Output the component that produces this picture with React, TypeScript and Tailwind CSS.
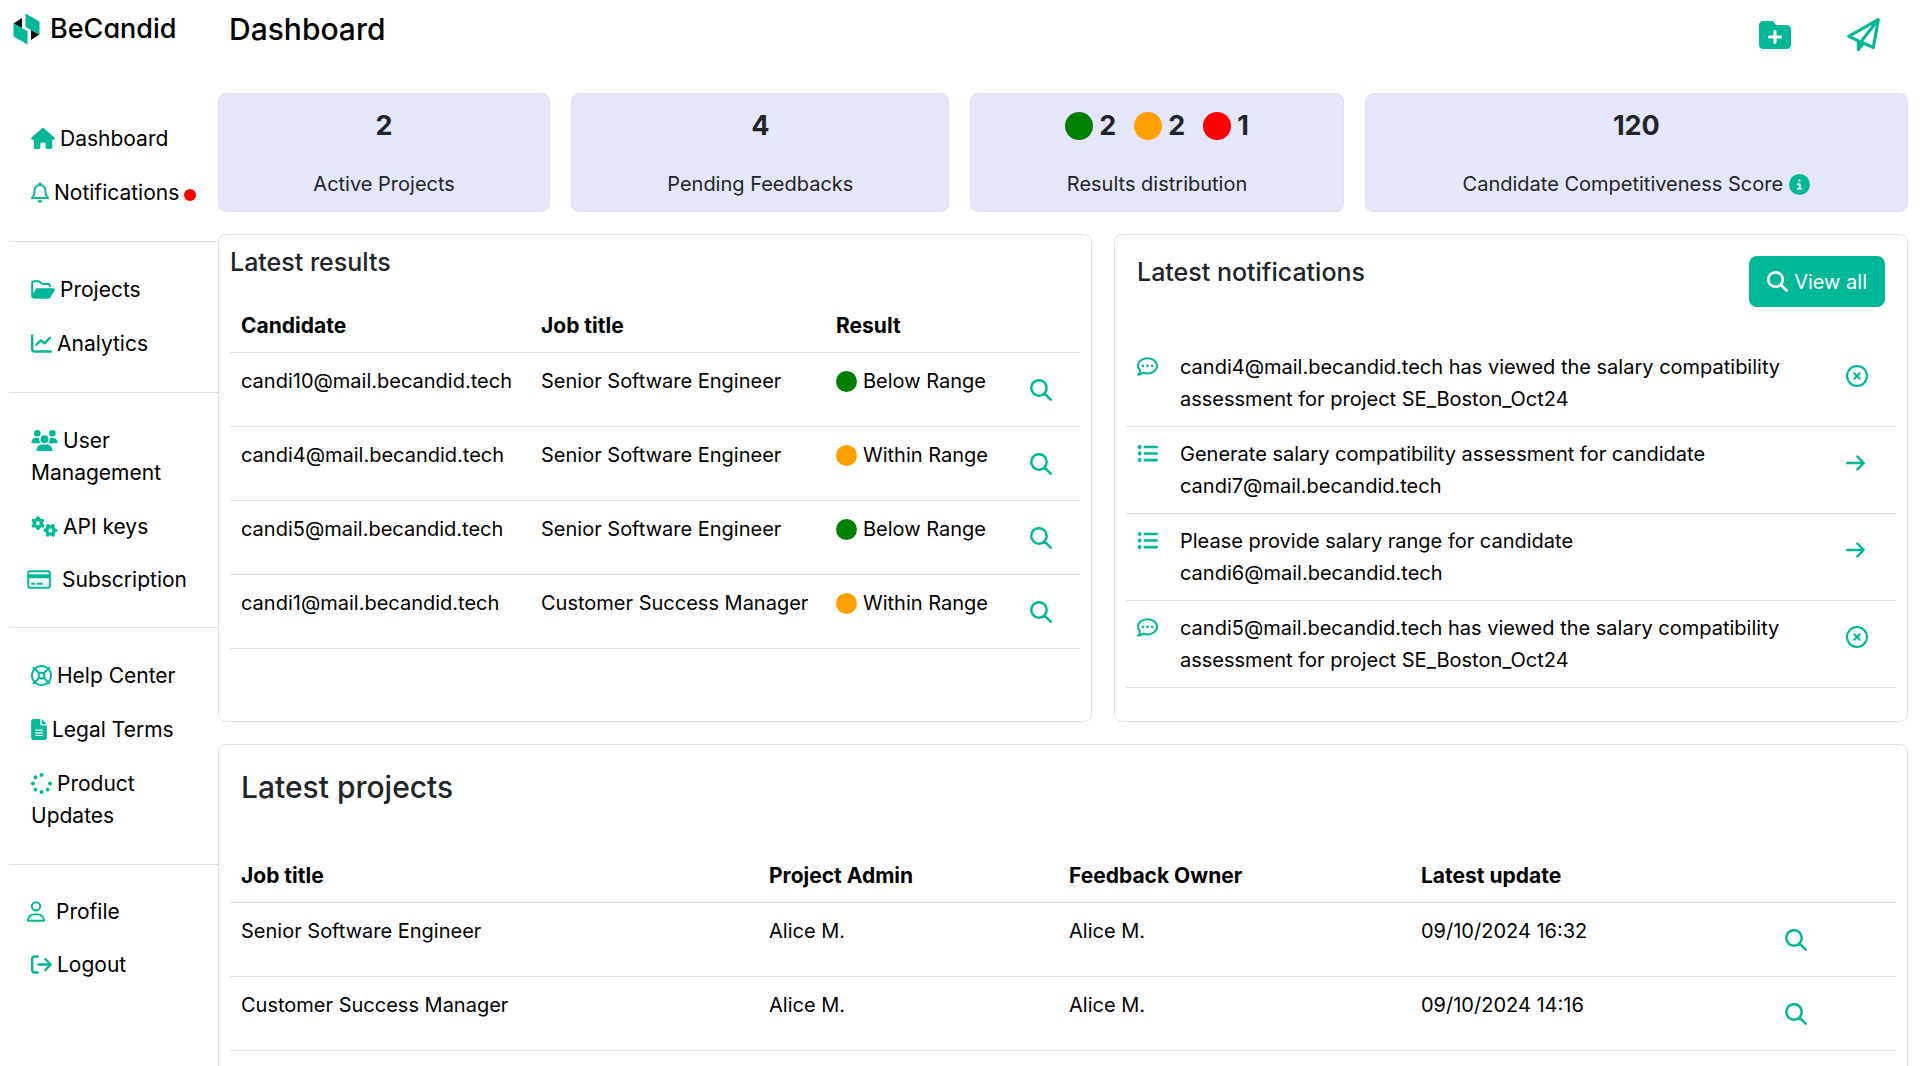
import type { ReactNode } from "react";
import {
  FaCircleInfo,
  FaFileLines,
  FaFolderPlus,
  FaGears,
  FaHouse,
  FaListUl,
  FaMagnifyingGlass,
  FaRegBell,
  FaRegCircleXmark,
  FaRegCommentDots,
  FaRegCreditCard,
  FaRegLifeRing,
  FaRegUser,
  FaSpinner,
  FaUsers,
} from "react-icons/fa6";

type IconProps = { className?: string };
type NavItem = {
  label: string;
  icon: (props: IconProps) => ReactNode;
  width: string;
  alert?: boolean;
  outdent?: boolean;
};

function LineIcon({ d, viewBox = "0 0 512 512", className }: IconProps & { d: string; viewBox?: string }) {
  return (
    <svg
      viewBox={viewBox}
      fill="none"
      stroke="currentColor"
      strokeWidth="58"
      strokeLinecap="round"
      strokeLinejoin="round"
      className={className}
      aria-hidden="true"
    >
      <path d={d} />
    </svg>
  );
}

const SearchIcon = ({ className }: IconProps) => (
  <LineIcon className={className} d="M29 208a180 180 0 1 0 360 0a180 180 0 1 0 -360 0M340 340L482 482" />
);

const ChartIcon = ({ className }: IconProps) => (
  <LineIcon className={className} d="M29 60V396a56 56 0 0 0 56 56H483M132 282L244 178 332 252 462 116" />
);

const LogoutIcon = ({ className }: IconProps) => (
  <LineIcon
    className={className}
    d="M166 60H90a61 61 0 0 0-61 61V391a61 61 0 0 0 61 61H166M182 256H476M350 122L483 256 350 390"
  />
);

const ArrowIcon = ({ className }: IconProps) => (
  <LineIcon className={className} viewBox="0 0 448 512" d="M29 256H412M268 106L418 256 268 406" />
);

const FolderOpenIcon = ({ className }: IconProps) => (
  <svg viewBox="0 0 576 512" fill="currentColor" className={className} aria-hidden="true">
    <path d="M384 480h48c11.400 0 21.900-6 27.600-15.900l112-192c5.800-9.900 5.800-22.100 .100-32.100S555.500 224 544 224H144c-11.400 0-21.900 6-27.600 15.900L48 357.100V96c0-8.800 7.200-16 16-16H181.500c4.200 0 8.300 1.700 11.300 4.700l26.500 26.500c21 21 49.500 32.800 79.200 32.800H416c8.800 0 16 7.200 16 16v32h48V160c0-35.300-28.700-64-64-64H298.500c-17 0-33.300-6.700-45.300-18.700L226.700 50.700c-12-12-28.300-18.700-45.300-18.700H64C28.700 32 0 60.700 0 96V416c0 35.300 28.700 64 64 64H384z" />
  </svg>
);

const PlaneIcon = ({ className }: IconProps) => (
  <svg viewBox="0 0 512 512" className={className} aria-hidden="true">
    <path
      d="M486 26L26 284 408 460ZM482 32L218 366"
      fill="none"
      stroke="currentColor"
      strokeWidth="48"
      strokeLinejoin="round"
      strokeLinecap="round"
    />
    <path d="M152 346V488a24 24 0 0 0 44 14L280 400Z" fill="currentColor" />
  </svg>
);

const NAV: NavItem[][] = [
  [
    { label: "Dashboard", icon: FaHouse, width: "w-6" },
    { label: "Notifications", icon: FaRegBell, width: "w-[18px]", alert: true },
  ],
  [
    { label: "Projects", icon: FolderOpenIcon, width: "w-6" },
    { label: "Analytics", icon: ChartIcon, width: "w-[21px]" },
  ],
  [
    { label: "User Management", icon: FaUsers, width: "w-[27px]" },
    { label: "API keys", icon: FaGears, width: "w-[27px]" },
    { label: "Subscription", icon: FaRegCreditCard, width: "w-6", outdent: true },
  ],
  [
    { label: "Help Center", icon: FaRegLifeRing, width: "w-[21px]" },
    { label: "Legal Terms", icon: FaFileLines, width: "w-4" },
    { label: "Product Updates", icon: FaSpinner, width: "w-[21px]" },
  ],
  [
    { label: "Profile", icon: FaRegUser, width: "w-[18px]", outdent: true },
    { label: "Logout", icon: LogoutIcon, width: "w-[21px]" },
  ],
];

const RESULTS = [
  { candidate: "candi10@mail.becandid.tech", job: "Senior Software Engineer", below: true },
  { candidate: "candi4@mail.becandid.tech", job: "Senior Software Engineer", below: false },
  { candidate: "candi5@mail.becandid.tech", job: "Senior Software Engineer", below: true },
  { candidate: "candi1@mail.becandid.tech", job: "Customer Success Manager", below: false },
];

const NOTIFICATIONS = [
  {
    text: "candi4@mail.becandid.tech has viewed the salary compatibility assessment for project SE_Boston_Oct24",
    task: false,
  },
  { text: "Generate salary compatibility assessment for candidate candi7@mail.becandid.tech", task: true },
  { text: "Please provide salary range for candidate candi6@mail.becandid.tech", task: true },
  {
    text: "candi5@mail.becandid.tech has viewed the salary compatibility assessment for project SE_Boston_Oct24",
    task: false,
  },
];

const PROJECTS = [
  { job: "Senior Software Engineer", admin: "Alice M.", owner: "Alice M.", updated: "09/10/2024 16:32" },
  { job: "Customer Success Manager", admin: "Alice M.", owner: "Alice M.", updated: "09/10/2024 14:16" },
];

const TH = "px-[11px] pt-[11px] pb-[10px] text-left text-[21px] leading-8 font-bold";
const TD = "px-[11px] pt-3 align-top";

function Logo() {
  return (
    <a href="#home" className="flex items-center gap-[10px] pl-1 text-black">
      <svg viewBox="0 0 27 32" className="h-8 w-[27px] shrink-0" aria-hidden="true">
        <path d="M0.500 10.500 9 5V15z" fill="#0b0f0e" />
        <path d="M18 17 26.500 21.500 18 27z" fill="#0b0f0e" />
        <path d="M12.500 0.500 26.500 8.500V21.500L12.500 14z" fill="#00b898" />
        <path d="M0.500 10.500 14.500 18V31.500L0.500 23.500z" fill="#00b898" />
      </svg>
      <span className="text-[27px] leading-8 font-medium [font-feature-settings:'cv11']">BeCandid</span>
    </a>
  );
}

function Sidebar() {
  return (
    <aside className="w-[218px] shrink-0 pt-[13px] pl-[9px]">
      <Logo />
      <nav aria-label="Main" className="pt-[46px] text-[21px]">
        {NAV.map((group, i) => (
          <ul
            key={i}
            className="flex flex-col gap-[22px] border-b border-[#dee2e6] py-8 pr-5 pl-[22px] last:border-b-0"
          >
            {group.map(({ label, icon: Icon, width, alert, outdent }) => (
              <li key={label} className={outdent ? "-ml-1 leading-[30px]" : "leading-8"}>
                <a href={"#" + label.toLowerCase().replace(" ", "-")} className="text-black">
                  <Icon
                    className={
                      (outdent ? "mr-[11px] " : "mr-[5px] ") + width + " inline h-[21px] align-[-3px] text-[#00b898]"
                    }
                  />
                  {label}
                  {alert && <span className="ml-[5px] inline-block size-3 rounded-full bg-[#ff0000] align-[-1px]" />}
                </a>
              </li>
            ))}
          </ul>
        ))}
      </nav>
    </aside>
  );
}

function StatCard({ value, label }: { value: ReactNode; label: ReactNode }) {
  return (
    <div className="flex flex-col items-center gap-[26px] rounded-lg border border-[#dee2e6] bg-[#e6e6fa] pt-4 pb-[11px]">
      <div className="text-[27px] leading-8 font-bold">{value}</div>
      <div className="leading-8">{label}</div>
    </div>
  );
}

function Tally({ dot, count }: { dot: string; count: number }) {
  return (
    <span className="flex items-center gap-[6px]">
      <span className={"size-7 rounded-full " + dot} />
      {count}
    </span>
  );
}

function OpenButton({ label }: { label: string }) {
  return (
    <button type="button" aria-label={label} className="mt-[14px] block text-[#00b898]">
      <SearchIcon className="size-[22px]" />
    </button>
  );
}

function LatestResults() {
  return (
    <section className="rounded-lg border border-[#dee2e6] p-[11px]">
      <h2 className="text-[25px] leading-8 font-medium">Latest results</h2>
      <table className="mt-[21px] w-full table-fixed text-black">
        <colgroup>
          <col className="w-[300px]" />
          <col className="w-[295px]" />
          <col />
          <col className="w-[61px]" />
        </colgroup>
        <thead>
          <tr className="border-b border-[#dee2e6]">
            <th className={TH}>Candidate</th>
            <th className={TH}>Job title</th>
            <th className={TH}>Result</th>
            <th className={TH}></th>
          </tr>
        </thead>
        <tbody>
          {RESULTS.map((r) => (
            <tr key={r.candidate} className="h-[74px] border-b border-[#dee2e6]">
              <td className={TD}>{r.candidate}</td>
              <td className={TD}>{r.job}</td>
              <td className={TD}>
                <span className="flex items-center gap-[6px] whitespace-nowrap">
                  <span
                    className={
                      r.below ? "size-[21px] rounded-full bg-[#008000]" : "size-[21px] rounded-full bg-[#ffa000]"
                    }
                  />
                  {r.below ? "Below Range" : "Within Range"}
                </span>
              </td>
              <td className={TD}>
                <OpenButton label={"Open result of " + r.candidate} />
              </td>
            </tr>
          ))}
        </tbody>
      </table>
    </section>
  );
}

function LatestNotifications() {
  return (
    <section className="rounded-lg border border-[#dee2e6] p-[11px] pt-[21px]">
      <div className="flex items-start justify-between px-[11px]">
        <h2 className="text-[25px] leading-8 font-medium">Latest notifications</h2>
        <button
          type="button"
          className="flex h-[51px] items-center gap-[6px] rounded-lg bg-[#00b898] px-[18px] text-white"
        >
          <FaMagnifyingGlass className="size-[21px]" />
          View all
        </button>
      </div>
      <ul className="mt-[33px] text-black">
        {NOTIFICATIONS.map(({ text, task }) => (
          <li key={text} className="flex border-b border-[#dee2e6] py-[11px] pr-7 pl-[11px]">
            <span className="w-[43px] shrink-0 pt-[5px] text-[#00b898]">
              {task ? <FaListUl className="size-[21px]" /> : <FaRegCommentDots className="size-[21px]" />}
            </span>
            <p className="flex-1 pr-8">{text}</p>
            <button
              type="button"
              aria-label={task ? "Go to task" : "Dismiss"}
              className="mt-[14px] flex w-[22px] shrink-0 self-start text-[#00b898]"
            >
              {task ? <ArrowIcon className="h-[22px] w-[19px]" /> : <FaRegCircleXmark className="size-[22px]" />}
            </button>
          </li>
        ))}
      </ul>
    </section>
  );
}

function LatestProjects() {
  return (
    <section className="rounded-lg border border-[#dee2e6] px-[11px] pt-[26px] pb-8">
      <h2 className="px-[11px] text-[30px] leading-8 font-medium">Latest projects</h2>
      <table className="mt-[46px] w-full table-fixed text-black">
        <colgroup>
          <col className="w-[528px]" />
          <col className="w-[300px]" />
          <col className="w-[352px]" />
          <col className="w-[364px]" />
          <col className="w-[122px]" />
        </colgroup>
        <thead>
          <tr className="border-b border-[#dee2e6]">
            <th className={TH}>Job title</th>
            <th className={TH}>Project Admin</th>
            <th className={TH}>Feedback Owner</th>
            <th className={TH}>Latest update</th>
            <th className={TH}></th>
          </tr>
        </thead>
        <tbody>
          {PROJECTS.map((p) => (
            <tr key={p.job} className="h-[74px] border-b border-[#dee2e6]">
              <td className={TD}>{p.job}</td>
              <td className={TD}>{p.admin}</td>
              <td className={TD}>{p.owner}</td>
              <td className={TD}>{p.updated}</td>
              <td className={TD}>
                <OpenButton label={"Open project " + p.job} />
              </td>
            </tr>
          ))}
        </tbody>
      </table>
    </section>
  );
}

export default function App() {
  return (
    <div className="flex h-screen overflow-hidden bg-white font-['Inter',sans-serif] text-[20px] leading-8 text-[#212529]">
      <Sidebar />
      <main className="min-w-0 flex-1 pr-3">
        <header className="flex h-[93px] items-start justify-between pr-7 pl-[11px]">
          <h1 className="pt-[9px] text-[30px] leading-10 font-medium text-black">Dashboard</h1>
          <div className="flex gap-14 pt-[18px] text-[#00b898]">
            <button type="button" aria-label="New project">
              <FaFolderPlus className="size-8" />
            </button>
            <button type="button" aria-label="Send">
              <PlaneIcon className="size-[33px]" />
            </button>
          </div>
        </header>
        <div className="grid grid-cols-[332fr_378fr_373fr_543fr] gap-[21px]">
          <StatCard value="2" label="Active Projects" />
          <StatCard value="4" label="Pending Feedbacks" />
          <StatCard
            value={
              <span className="flex gap-[18px]">
                <Tally dot="bg-[#008000]" count={2} />
                <Tally dot="bg-[#ffa000]" count={2} />
                <Tally dot="bg-[#ff0000]" count={1} />
              </span>
            }
            label="Results distribution"
          />
          <StatCard
            value="120"
            label={
              <span className="flex items-center gap-[6px]">
                Candidate Competitiveness Score
                <FaCircleInfo className="size-[21px] text-[#00b898]" />
              </span>
            }
          />
        </div>
        <div className="my-[22px] grid min-h-[488px] grid-cols-[874fr_794fr] gap-[22px]">
          <LatestResults />
          <LatestNotifications />
        </div>
        <LatestProjects />
      </main>
    </div>
  );
}
